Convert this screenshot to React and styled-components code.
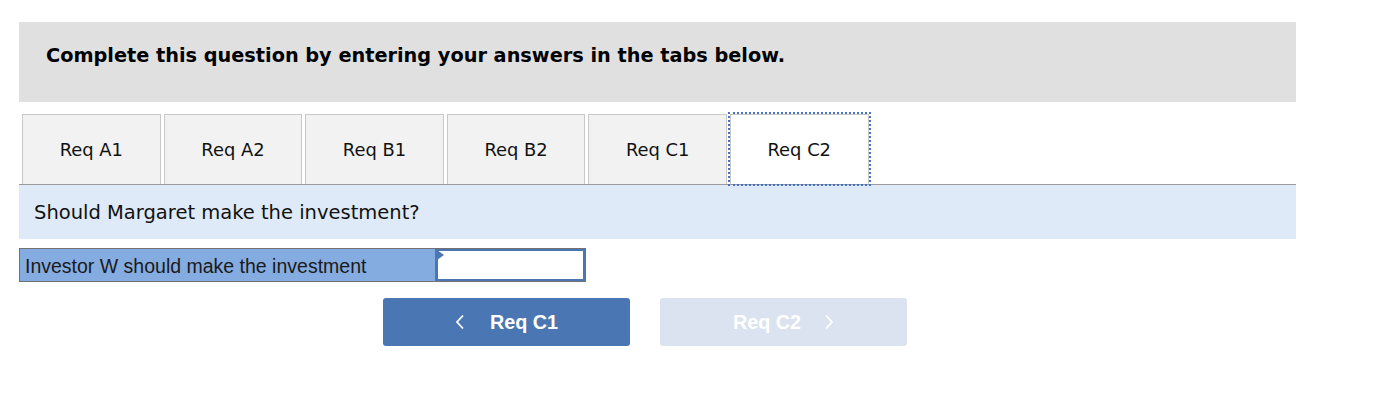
import React from 'react'
import styled, { createGlobalStyle } from 'styled-components'

const Global = createGlobalStyle`
body{
  margin:0;
  background:#fff;
  font-family:"DejaVu Sans", Verdana, sans-serif;
}
`

const tabs = ['Req A1', 'Req A2', 'Req B1', 'Req B2', 'Req C1', 'Req C2']

const App = () => {
  return (
    <Page>
      <Global />
      <Header>Complete this question by entering your answers in the tabs below.</Header>
      <TabRow>
        {tabs.map((t, i) => (
          <Tab key={t} active={i === tabs.length - 1}>{t}</Tab>
        ))}
      </TabRow>
      <Question>Should Margaret make the investment?</Question>
      <AnswerRow>
        <Select>Investor W should make the investment</Select>
        <Input>
          <Marker />
        </Input>
      </AnswerRow>
      <NavRow>
        <NavButton>
          <Chevron viewBox="0 0 10 16"><path d="M8 1.5 L2 8 L8 14.5" /></Chevron>
          <span>Req C1</span>
        </NavButton>
        <NavButton disabled>
          <span>Req C2</span>
          <Chevron viewBox="0 0 10 16"><path d="M2 1.5 L8 8 L2 14.5" /></Chevron>
        </NavButton>
      </NavRow>
    </Page>
  )
}

export default App

const Page = styled.div`
width:1277px;
margin-left:19px;
padding-top:22px;
`
const Header = styled.div`
height:80px;
box-sizing:border-box;
background:#e0e0e0;
padding:24px 0 0 27px;
font-weight:bold;
font-size:19.3px;
line-height:20px;
color:#000;
`
const TabRow = styled.div`
margin-top:12px;
display:flex;
align-items:flex-end;
gap:2.9px;
padding-left:3px;
border-bottom:1px solid #9a9a9a;
`
const Tab = styled.div`
width:138.7px;
height:70px;
box-sizing:border-box;
border:1px solid #c8c8c8;
border-bottom:none;
background:${p => (p.active ? '#fff' : '#f2f2f2')};
outline:${p => (p.active ? '2px dotted #4472c4' : 'none')};
display:flex;
align-items:center;
justify-content:center;
font-size:17.9px;
color:#111;
`
const Question = styled.div`
height:54px;
box-sizing:border-box;
background:#deeaf7;
padding:18px 0 0 15px;
font-size:19.5px;
line-height:20px;
color:#111;
`
const AnswerRow = styled.div`
margin-top:9px;
display:flex;
`
const Select = styled.div`
width:416px;
height:34px;
box-sizing:border-box;
background:#85ace0;
border:1px solid #717171;
border-right:none;
padding:6.5px 0 0 5px;
font-family:"Liberation Sans", Arial, sans-serif;
font-size:19.5px;
line-height:20px;
color:#1a1a1a;
`
const Input = styled.div`
position:relative;
width:151px;
height:34px;
box-sizing:border-box;
border:1px solid #717171;
box-shadow:inset 0 0 0 2px #4a76b4;
background:#fff;
`
const Marker = styled.div`
position:absolute;
left:1px;
top:1px;
width:0;
height:0;
border-top:5px solid transparent;
border-bottom:5px solid transparent;
border-left:7px solid #4a76b4;
`
const NavRow = styled.div`
margin-top:16px;
padding-left:364px;
display:flex;
gap:30px;
`
const NavButton = styled.div`
width:247px;
height:48px;
border-radius:3px;
background:${p => (p.disabled ? '#dae3ef' : '#4a76b4')};
color:#fff;
display:flex;
align-items:center;
justify-content:center;
gap:${p => (p.disabled ? '23px' : '25px')};
font-family:"Liberation Sans", Arial, sans-serif;
font-weight:bold;
font-size:19.8px;
`
const Chevron = styled.svg`
width:10px;
height:16px;
fill:none;
stroke:#fff;
stroke-width:1.8;
`
